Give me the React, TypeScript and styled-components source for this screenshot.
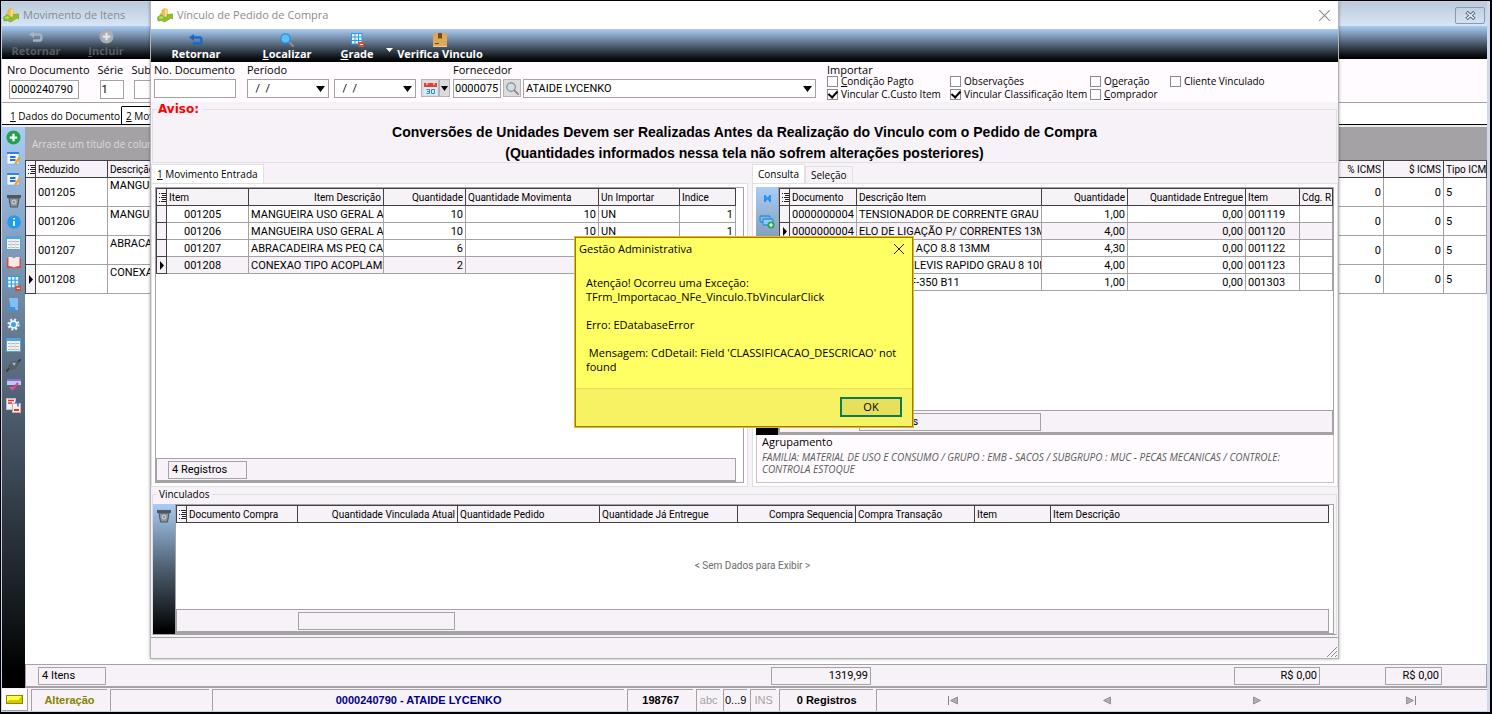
import React from 'react';
import styled, { createGlobalStyle, css } from 'styled-components';

const ui = '"Open Sans", "Noto Sans", sans-serif';
const grid = 'Roboto, "Liberation Sans", sans-serif';
const surface = '#f7f2f7';
const panel = '#fffbff';
const line = '#a5a2a5';

const Global = createGlobalStyle`
  * { box-sizing: border-box; }
  html, body { margin: 0; }
  body { font: 11px/14px ${ui}; color: #000; background: #000; }
  button, input, select { font: inherit; color: inherit; border-radius: 0; margin: 0; padding: 0; }
  button { border: 0; background: none; }
  svg { display: block; flex: none; }
`;

/* ---------- shell ---------- */

const Shell = styled.div`
  position: relative;
  display: flex;
  flex-direction: column;
  min-height: 100vh;
  padding: 1px 2px 2px 1px;
  background: #000;
`;

const MainWindow = styled.main`
  flex: 1;
  display: flex;
  flex-direction: column;
  min-width: 0;
  background: ${surface};
  border: 1px solid #c6d3e7;
  border-right: 3px solid #ccd9ee;
`;

const MainTitle = styled.header`
  display: flex;
  align-items: center;
  gap: 4px;
  height: 24px;
  padding: 2px 2px 0 1px;
  background: linear-gradient(#bccbdb, #d6e6f7);
  color: #858b94;
  line-height: 16px;
  h1 { flex: 1; margin: 0; font: inherit; }
`;

const CloseBox = styled.button`
  width: 30px;
  height: 17px;
  border: 1px solid #8a9aac;
  border-radius: 2px;
  display: grid;
  place-items: center;
`;

const Toolbar = styled.div`
  display: flex;
  height: 33px;
  background: linear-gradient(#a9cdf5, #546679 48%, #0c1014 88%, #000);
`;

const ToolButton = styled.button<{ $w: number; $off?: boolean }>`
  width: ${p => p.$w}px;
  display: flex;
  flex-direction: column;
  align-items: center;
  justify-content: flex-end;
  white-space: nowrap;
  font-weight: 700;
  font-size: 11px;
  line-height: 14px;
  padding-bottom: 1px;
  color: ${p => (p.$off ? '#5a5f66' : '#fff')};
`;

const MainForm = styled.form`
  display: flex;
  gap: 8px;
  height: 44px;
  padding: 4px 5px 0;
  background: ${panel};
  border-bottom: 1px solid ${line};
`;

const Field = styled.label`
  display: flex;
  flex-direction: column;
  gap: 3px;
  white-space: nowrap;
  input { margin-left: 2px; }
`;

const TextBox = styled.input<{ $w: number }>`
  width: ${p => p.$w}px;
  height: 19px;
  padding: 0 1px;
  border: 1px solid ${line};
  background: #fff;
  font-family: ${grid};
  font-size: 11px;
`;

const MainTabs = styled.nav`
  display: flex;
  align-items: flex-end;
  height: 22px;
  background: #fff;
  border-bottom: 1px solid #000;
  box-shadow: 0 2px 0 #efebef;
`;

const MainTab = styled.button<{ $w: number }>`
  width: ${p => p.$w}px;
  height: 18px;
  padding-left: 4px;
  font-size: 10px;
  white-space: nowrap;
  text-align: left;
  background: #fff;
  border: 1px solid #000;
  border-width: 1px 1px 0 0;
  &:first-child { border-top-color: #fff; padding-left: 8px; }
`;

const MainBody = styled.div`
  flex: 1;
  display: flex;
  min-height: 0;
  margin-top: 2px;
`;

const SideBar = styled.aside<{ $pad: number }>`
  flex: none;
  width: ${p => (p.$pad ? 22 : 23)}px;
  padding-top: ${p => p.$pad || 3}px;
  background: linear-gradient(#a9cdf5, #546679 46%, #111518 88%, #000 97%);
`;

const IconStack = styled.div<{ $h: number }>`
  height: ${p => p.$h}px;
  display: flex;
  flex-direction: column;
  align-items: center;
  justify-content: space-between;
`;

const MainGrid = styled.section`
  flex: 1;
  min-width: 0;
  display: flex;
  flex-direction: column;
  background: #fff;
`;

const GroupBar = styled.div`
  height: 33px;
  padding: 10px 7px 0;
  background: #a5a2a5;
  color: #dcdadc;
  font-size: 10px;
  white-space: nowrap;
`;

const Footer = styled.div`
  display: flex;
  align-items: center;
  height: 24px;
  margin-top: auto;
  background: ${surface};
  border: 1px solid ${line};
  border-bottom-width: 2px;
  font-family: ${grid};
  font-size: 11px;
`;

const SumBox = styled.output<{ $w: number; $right?: boolean; $ml?: number }>`
  width: ${p => p.$w}px;
  height: 18px;
  line-height: 16px;
  margin-left: ${p => p.$ml ?? 0}px;
  padding: 0 2px 0 3px;
  border: 1px solid ${line};
  white-space: nowrap;
  text-align: ${p => (p.$right ? 'right' : 'left')};
`;

const Spring = styled.span<{ $n: number }>`
  flex: ${p => p.$n} 1 0;
`;

const StatusBar = styled.footer`
  display: flex;
  gap: 3px;
  height: 23px;
  padding-top: 1px;
  background: ${surface};
  font-family: "Liberation Sans", sans-serif;
  font-size: 11px;
  font-weight: 700;
  line-height: 20px;
`;

const StatusCell = styled.div<{ $w?: number; $grow?: number; $tone?: string; $plain?: boolean }>`
  ${p => (p.$grow ? css`flex: ${p.$grow} 1 0;` : css`flex: none; width: ${p.$w}px;`)}
  border-top: 1px solid ${line};
  border-left: 1px solid ${line};
  text-align: center;
  white-space: nowrap;
  color: ${p => p.$tone || '#000'};
  font-weight: ${p => (p.$plain ? 400 : 700)};
`;

const LedCell = styled.div`
  width: 26px;
  display: grid;
  place-items: center;
  border-right: 1px solid ${line};
  border-bottom: 1px solid ${line};
  background: ${panel};
`;

const NavCell = styled(StatusCell)`
  display: flex;
  button { flex: 1; display: grid; place-items: center; }
`;

/* ---------- tables ---------- */

const Table = styled.table`
  width: 100%;
  table-layout: fixed;
  border-collapse: separate;
  border-spacing: 0;
  border-top: 1px solid #424142;
  border-left: 1px solid #424142;
  font-family: ${grid};
  font-size: 11px;
  line-height: 15px;
`;

const Th = styled.th<{ $right?: boolean }>`
  height: 17px;
  padding: 0 2px;
  font-size: 10px;
  font-weight: 400;
  text-align: ${p => (p.$right ? 'right' : 'left')};
  background: ${surface};
  border-right: 1px solid #424142;
  border-bottom: 1px solid #424142;
  overflow: hidden;
  white-space: nowrap;
`;

const Td = styled.td<{ $h: number; $right?: boolean; $on?: boolean; $top?: boolean; $indent?: number }>`
  height: ${p => p.$h}px;
  padding: 0 2px 0 ${p => p.$indent ?? 2}px;
  vertical-align: ${p => (p.$top ? 'top' : 'middle')};
  text-align: ${p => (p.$right ? 'right' : 'left')};
  background: ${p => (p.$on ? surface : '#fff')};
  border-right: 1px solid ${line};
  border-bottom: 1px solid ${line};
  overflow: hidden;
  white-space: nowrap;
`;

const Mark = styled.td`
  padding: 0 0 0 2px;
  background: ${surface};
  border-right: 1px solid #424142;
  border-bottom: 1px solid #424142;
`;

type Col = { title: string; w?: number; right?: boolean; cellRight?: boolean; top?: boolean; indent?: number };

function DataTable({ cols, rows, current, rowHeight }: { cols: Col[]; rows: string[][]; current?: number; rowHeight: number }) {
  return (
    <Table>
      <colgroup>
        <col width={10} />
        {cols.map((c, i) => <col key={i} width={c.w} />)}
      </colgroup>
      <thead>
        <tr>
          <Th aria-label="Colunas"><ListGlyph /></Th>
          {cols.map((c, i) => <Th key={i} $right={c.right}>{c.title}</Th>)}
        </tr>
      </thead>
      <tbody>
        {rows.map((r, i) => (
          <tr key={i}>
            <Mark>{current === i && <Pointer />}</Mark>
            {r.map((v, j) => (
              <Td key={j} $h={rowHeight} $right={cols[j].cellRight ?? cols[j].right} $top={cols[j].top}
                $indent={cols[j].indent} $on={current === i && rowHeight < 20}>{v}</Td>
            ))}
          </tr>
        ))}
      </tbody>
    </Table>
  );
}

/* ---------- link window ---------- */

const LinkWindow = styled.section`
  position: absolute;
  z-index: 1;
  top: 1px;
  left: 150px;
  right: 153px;
  bottom: 55px;
  display: flex;
  flex-direction: column;
  background: ${surface};
  border: 1px solid #b5b2b5;
  border-top: 0;
  box-shadow: 0 0 3px rgba(0, 0, 0, 0.35);
`;

const LinkTitle = styled.header`
  display: flex;
  align-items: center;
  gap: 4px;
  height: 28px;
  padding: 0 8px 0 6px;
  background: #fff;
  color: #8c8c8c;
  h2 { flex: 1; margin: 0; font: inherit; }
`;

const Filters = styled.form`
  display: flex;
  height: 40px;
  padding: 1px 3px 0;
  background: ${panel};
`;

const Line = styled.div<{ $gap: number }>`
  display: flex;
  gap: ${p => p.$gap}px;
`;

const Block = styled.div<{ $mr: number; $grow?: boolean }>`
  display: flex;
  flex-direction: column;
  gap: 2px;
  margin-right: ${p => p.$mr}px;
  ${p => p.$grow && 'flex: 1; min-width: 0;'}
`;

const Combo = styled.span<{ $w?: number }>`
  ${p => (p.$w ? css`width: ${p.$w}px;` : css`flex: 1; min-width: 0;`)}
  display: flex;
  align-items: center;
  height: 19px;
  padding: 0 3px 0 0;
  background: #fff;
  border: 1px solid ${line};
  font-family: ${grid};
  font-size: 11px;
  input, select {
    flex: 1;
    min-width: 0;
    border: 0;
    outline: 0;
    background: #fff;
    appearance: none;
    padding-left: 2px;
    height: 16px;
  }
`;

const GrayButton = styled.button<{ $w: number }>`
  width: ${p => p.$w}px;
  height: 18px;
  display: grid;
  place-items: center;
  background: #dedbde;
  border: 1px solid #b5b2b5;
`;

const Checks = styled.fieldset`
  width: 508px;
  margin: 0;
  border: 0;
  padding: 0;
  legend { padding: 0; height: 12px; line-height: 14px; }
`;

const CheckGrid = styled.div`
  display: grid;
  grid-template-columns: 123px 140px 80px auto;
  grid-auto-rows: 13px;
`;

const CheckItem = styled.label`
  display: flex;
  align-items: center;
  gap: 3px;
  font-size: 10px;
  line-height: 13px;
  white-space: nowrap;
  input {
    appearance: none;
    width: 11px;
    height: 11px;
    border: 1px solid #8c8a8c;
    background: #fff;
    display: grid;
    place-items: center;
  }
  input:checked::after {
    content: "";
    width: 4px;
    height: 7px;
    margin-top: -2px;
    border: solid #000;
    border-width: 0 2px 2px 0;
    transform: rotate(42deg);
  }
`;

const Notice = styled.fieldset`
  margin: 1px 1px 0;
  padding: 0;
  height: 60px;
  border: 1px solid #e0dfe2;
  text-align: left;
  font: 700 14px/21px "Liberation Sans", sans-serif;
  legend {
    margin-left: 4px;
    padding: 0 4px 0 1px;
    font: 700 12px/13px "DejaVu Sans", sans-serif;
    color: #f00;
  }
  p { margin: 0; text-align: center; white-space: nowrap; }
  p:first-of-type { margin-top: 6px; }
`;

const Split = styled.div`
  flex: 1;
  min-height: 0;
  display: grid;
  grid-template-columns: 601fr 586fr;
`;

const Pane = styled.section`
  min-width: 0;
  display: flex;
  flex-direction: column;
`;

const Tabs = styled.div`
  display: flex;
  align-items: flex-end;
  height: 20px;
`;

const Tab = styled.button<{ $on?: boolean }>`
  height: ${p => (p.$on ? 19 : 17)}px;
  padding: 0 5px;
  border: 1px solid #e3e0e3;
  border-bottom: 0;
  background: ${p => (p.$on ? '#fff' : surface)};
  font-size: 10px;
  white-space: nowrap;
`;

const Page = styled.div<{ $mr: number }>`
  flex: 1;
  min-height: 0;
  display: flex;
  margin-right: ${p => p.$mr}px;
  padding: 3px;
  background: #fff;
  border: 1px solid #e3e0e3;
`;

const GridBox = styled.div<{ $pr?: number }>`
  flex: 1;
  min-width: 0;
  display: flex;
  flex-direction: column;
  padding-right: ${p => p.$pr ?? 0}px;
  background: #fff;
  border: 1px solid ${line};
  overflow: hidden;
`;

const Stack = styled.div`
  flex: 1;
  min-width: 0;
  display: flex;
  flex-direction: column;
`;

const Row = styled.div<{ $h?: number }>`
  ${p => (p.$h ? css`height: ${p.$h}px;` : css`flex: 1; min-height: 0;`)}
  display: flex;
`;

const Group = styled.div`
  height: 48px;
  padding: 0 5px;
  background: ${panel};
  border: 1px solid #c6c3c6;
  border-top: 0;
  em { display: block; font-size: 10px; line-height: 12px; color: #5a5a5a; margin-top: 2px; }
`;

const Linked = styled.fieldset`
  margin: 0 1px;
  padding: 3px 2px 0 0;
  border: 1px solid #e0dfe2;
  border-bottom-color: ${line};
  min-width: 0;
  legend { margin-left: 4px; padding: 0 2px; font-size: 10px; line-height: 14px; }
`;

const Empty = styled.p`
  flex: 1;
  display: grid;
  place-items: center;
  margin: 0;
  color: #6b6b6b;
  font-family: ${grid};
  font-size: 10px;
`;

const LinkStatus = styled.footer`
  display: flex;
  justify-content: flex-end;
  align-items: flex-end;
  height: 21px;
  margin-top: 2px;
  border-top: 1px solid ${line};
`;

/* ---------- alert ---------- */

const Alert = styled.section`
  position: absolute;
  z-index: 2;
  top: 237px;
  left: calc(50% - 171px);
  width: 338px;
  display: flex;
  flex-direction: column;
  background: #ffff63;
  border: 1px solid #8f7c10;
  outline: 1px solid #f0bc00;
  header { display: flex; justify-content: space-between; align-items: center; height: 22px; padding: 0 8px 0 3px; }
  p { margin: 0; padding: 16px 10px 13px; height: 128px; white-space: pre-line; }
  footer { display: flex; justify-content: flex-end; padding: 8px 10px 9px; height: 38px; background: #f7f263; border-top: 1px solid #e6df5c; }
`;

const OkButton = styled.button`
  width: 62px;
  height: 20px;
  background: #e6e05c;
  border: 2px solid #0a7d55;
`;

/* ---------- drawings ---------- */

const ListGlyph = () => (
  <svg width="7" height="11" viewBox="0 0 7 11"><path d="M2 1.5h5M3 3.5h4M2 5.5h5M3 7.5h4M2 9.5h5" stroke="#222" /><path d="M0 1.5h1M0 5.5h1M0 9.5h1" stroke="#222" /></svg>
);
const Pointer = () => <svg width="6" height="9" viewBox="0 0 6 9"><path d="M1 0l4 4.500-4 4.500z" fill="#000" /></svg>;
const Down = ({ w = 9 }: { w?: number }) => (
  <svg width={w} height={w > 7 ? 6 : 5} viewBox="0 0 9 6" preserveAspectRatio="none"><path d="M0 0h9L4.500 6z" fill="#000" /></svg>
);
const AppIcon = () => (
  <svg width="16" height="15" viewBox="0 0 16 15">
    <path d="M5 2l3-1.500 2.500 1V8L8 9.500 3 9V6l2-1z" fill="#f0c24c" stroke="#d9a32e" strokeWidth=".6" />
    <path d="M8 .8l2.500 1V8L8 9z" fill="#f8dc86" />
    <path d="M.5 9l4-2 3 2v1.500L11 8l-1-1.500 5.500-.5v5l-1.500-1L7.500 14 4.500 12.500 1 13z" fill="#8cc32a" stroke="#6a9a1c" strokeWidth=".6" />
    <path d="M1 9.500l3.500-1.500L7 9.500 4.500 11z" fill="#b6dd55" />
  </svg>
);
const Cross = ({ c = '#8c8c8c', s = 10 }: { c?: string; s?: number }) => (
  <svg width={s} height={s} viewBox="0 0 10 10"><path d="M0 0l10 10M10 0L0 10" stroke={c} strokeWidth="1" /></svg>
);
const Back = ({ c }: { c: string }) => (
  <svg width="14" height="14" viewBox="0 0 14 14"><path d="M3 4.500h7.500q2 0 2 3t-2 3H4" fill="none" stroke={c} strokeWidth="2.400" /><path d="M0 4.500L5 1v7z" fill={c} /></svg>
);
const PlusRound = ({ bg, fg, s = 15 }: { bg: string; fg: string; s?: number }) => (
  <svg width={s} height={s} viewBox="0 0 16 16"><circle cx="8" cy="8" r="7.500" fill={bg} /><path d="M8 4v8M4 8h8" stroke={fg} strokeWidth="2.400" /></svg>
);
const Lens = ({ glass, rim, s = 14 }: { glass: string; rim: string; s?: number }) => (
  <svg width={s} height={s} viewBox="0 0 14 14"><path d="M9 9l4 4" stroke="#9a8a80" strokeWidth="2" strokeLinecap="round" /><circle cx="5.500" cy="5.500" r="4.600" fill={glass} stroke={rim} strokeWidth="1.300" /></svg>
);
const GridIcon = ({ s = 14 }: { s?: number }) => (
  <svg width={s} height={s} viewBox="0 0 14 14"><rect x="1" y="0" width="11" height="11" fill="#eaf6ff" /><path d="M1 .5h11M1 4h11M1 7.500h11M1 11h11M1.500 0v11M5 0v11M8.500 0v11M12 0v11" stroke="#2a9af0" /><rect x="8.500" y="9" width="5.500" height="5" fill="#e8472c" /><path d="M10 11.500h3" stroke="#fff" /></svg>
);
const Box = () => (
  <svg width="14" height="14" viewBox="0 0 14 14"><rect width="14" height="14" fill="#dca95a" /><path d="M5 0h4v6L7 5 5 6z" fill="#7b4b1c" /><path d="M2 10.500h4" stroke="#6b4420" /><path d="M0 13.500h14" stroke="#f3cf8d" /></svg>
);
const Calendar = () => (
  <svg width="13" height="13" viewBox="0 0 13 13"><rect y="2" width="13" height="11" fill="#d9ecfb" /><rect y="1" width="13" height="4" fill="#e8402f" /><path d="M3 0v3M10 0v3" stroke="#fff" /><path d="M2.500 7.500h3v4h-3M3 9.500h2M7.500 7.500h3v4h-3z" fill="none" stroke="#2b86d8" /></svg>
);
const EditIcon = () => (
  <svg width="14" height="14" viewBox="0 0 14 14"><rect x="0" y="1" width="12" height="11" fill="#eef5ff" stroke="#6fa4df" strokeWidth=".6" /><rect y="0" width="12" height="2" fill="#3b82dd" /><path d="M3 5h5.500M3 8h5.500" stroke="#2a6fd6" strokeWidth="1.800" /><path d="M13 5l-5 7" stroke="#f4a321" strokeWidth="2.200" /></svg>
);
const Trash = () => (
  <svg width="14" height="14" viewBox="0 0 14 14"><path d="M2 4h10l-1.500 9h-7z" fill="#8b939b" stroke="#4c5359" /><path d="M0 1h14v3H0z" fill="#50575d" /><circle cx="7" cy="8" r="2" fill="none" stroke="#d3dae0" /></svg>
);
const Info = () => (
  <svg width="14" height="14" viewBox="0 0 14 14"><circle cx="7" cy="7" r="6.800" fill="#1f9bf0" /><path d="M7 6v5M7 3v1.600" stroke="#fff" strokeWidth="1.800" /></svg>
);
const SheetIcon = () => (
  <svg width="15" height="14" viewBox="0 0 15 14"><rect x=".5" y=".5" width="14" height="13" fill="#f4f2ef" stroke="#4ea5dd" /><path d="M1 2h13" stroke="#4ea5dd" strokeWidth="2" /><path d="M2 5.500h11M2 8.500h11M2 11.500h11" stroke="#b9b9b9" /><path d="M5 4v9M9.500 4v9" stroke="#ddd" /></svg>
);
const BookIcon = () => (
  <svg width="14" height="12" viewBox="0 0 14 12"><path d="M0 1h14v10H8l-1 1-1-1H0z" fill="#d34c48" /><path d="M1.500 0q4-.5 5.500 1.500Q8.500-.5 12.500 0v9Q8.500 9 7 10.500 5.500 9 1.500 9z" fill="#f6e9e6" /></svg>
);
const Scroll = () => (
  <svg width="13" height="13" viewBox="0 0 13 13"><path d="M2 0h9v12H4z" fill="#7cc0f8" /><path d="M0 9h8v1.500q.5 2 3 2H2.500Q0 12.500 0 9z" fill="#3b95e6" /></svg>
);
const Gear = () => (
  <svg width="13" height="13" viewBox="0 0 13 13"><circle cx="6.500" cy="6.500" r="5" fill="none" stroke="#e4f3fc" strokeWidth="2.200" strokeDasharray="2 1.930" /><circle cx="6.500" cy="6.500" r="3.400" fill="#3f9fe2" stroke="#eef8ff" strokeWidth="1.800" /></svg>
);
const Plug = () => (
  <svg width="15" height="13" viewBox="0 0 15 13"><path d="M0 13l5-6M10 5l5-5" stroke="#3c3f3f" strokeWidth="2" /><path d="M2 7l4-5h6l1 3-4 5-5 1z" fill="#565f62" /><path d="M6 3.500l4 .5-2 3z" fill="#7cc4ee" /></svg>
);
const Brush = () => (
  <svg width="14" height="12" viewBox="0 0 14 12"><rect width="14" height="6" fill="#c9c5f2" /><path d="M0 1h14" stroke="#7a74d4" strokeWidth="2" /><path d="M11 4l-6 7" stroke="#df3f9c" strokeWidth="2.200" /><path d="M2 8h5l-2 3z" fill="#e2579f" /></svg>
);
const Sheets = () => (
  <svg width="15" height="15" viewBox="0 0 15 15"><rect x=".5" y=".5" width="9" height="11" fill="#f4eef0" stroke="#c9b9c0" /><path d="M2 2.500h6M2 5h4" stroke="#e0362c" strokeWidth="1.500" /><rect x="6.500" y="5.500" width="8" height="9" fill="#fbeff0" stroke="#d0a8ac" /><path d="M8 12h5" stroke="#e0362c" strokeWidth="2" /><path d="M9 4.500h3v4" fill="none" stroke="#2a6fd6" strokeWidth="1.500" /></svg>
);
const LinkGlyph = () => (
  <svg width="7" height="7" viewBox="0 0 7 7"><path d="M1 0v7M6 0v7" stroke="#1f8ff0" strokeWidth="1.800" /><path d="M1 1l5 5M6 1L1 6" stroke="#1f8ff0" strokeWidth="1.300" /></svg>
);
const CardsPlus = () => (
  <svg width="16" height="14" viewBox="0 0 16 14"><rect x="1" y="1" width="10" height="6" rx="1" fill="none" stroke="#2a95e0" strokeWidth="1.300" /><rect x="4" y="4" width="10" height="6" rx="1" fill="#9cc8ee" stroke="#2a95e0" strokeWidth="1.300" /><circle cx="12" cy="10" r="3.500" fill="#2ea24a" /><path d="M12 8v4M10 10h4" stroke="#fff" strokeWidth="1.200" /></svg>
);
const Led = () => (
  <svg width="17" height="9" viewBox="0 0 17 9"><path d="M0 0h17v9H0z" fill="#8a8a00" /><path d="M1 1h15l-3 4H4L1 7z" fill="#ffff3a" /><path d="M1 7l3-2h9l3-3v6H1z" fill="#d2cc00" /></svg>
);
const NavGlyph = ({ flip, bar }: { flip?: boolean; bar?: boolean }) => (
  <svg width="12" height="9" viewBox="0 0 12 9">
    <g transform={flip ? 'translate(12 0) scale(-1 1)' : undefined}>
      <path d="M1.500 1l7 3.500-7 3.500z" fill="#b0adb0" stroke="#949294" />{bar && <path d="M10.500 0v9" stroke="#848284" />}
    </g>
  </svg>
);
const Grip = () => <svg width="12" height="12" viewBox="0 0 12 12"><path d="M1 11L11 1M5 11l6-6M9 11l2-2" stroke="#8c8a8c" /></svg>;

/* ---------- data ---------- */

const mainCols: Col[] = [
  { title: 'Reduzido', w: 72 }, { title: 'Descrição', top: true },
  { title: '% ICMS', w: 60, right: true }, { title: '$ ICMS', w: 60, right: true }, { title: 'Tipo ICM', w: 43 },
];
const mainRows = [
  ['001205', 'MANGUEIRA USO GERAL', '0', '0', '5'],
  ['001206', 'MANGUEIRA USO GERAL', '0', '0', '5'],
  ['001207', 'ABRACADEIRA MS PEQ', '0', '0', '5'],
  ['001208', 'CONEXAO TIPO ACOPLAMENTO', '0', '0', '5'],
];
const entryCols: Col[] = [
  { title: 'Item', w: 82, indent: 17 }, { title: 'Item Descrição', w: 135, right: true, cellRight: false },
  { title: 'Quantidade', w: 82, right: true }, { title: 'Quantidade Movimenta', w: 133, cellRight: true },
  { title: 'Un Importar', w: 81 }, { title: 'Indice', cellRight: true },
];
const entryRows = [
  ['001205', 'MANGUEIRA USO GERAL A', '10', '10', 'UN', '1'],
  ['001206', 'MANGUEIRA USO GERAL A', '10', '10', 'UN', '1'],
  ['001207', 'ABRACADEIRA MS PEQ CAR', '6', '6', 'UN', '1'],
  ['001208', 'CONEXAO TIPO ACOPLAME', '2', '2', 'UN', '1'],
];
const orderCols: Col[] = [
  { title: 'Documento', w: 67 }, { title: 'Descrição Item', w: 185 }, { title: 'Quantidade', w: 86, right: true },
  { title: 'Quantidade Entregue', w: 118, right: true }, { title: 'Item', w: 54 }, { title: 'Cdg. R' },
];
const orderRows = [
  ['0000000004', 'TENSIONADOR DE CORRENTE GRAU', '1,00', '0,00', '001119', ''],
  ['0000000004', 'ELO DE LIGAÇÃO P/ CORRENTES 13M', '4,00', '0,00', '001120', ''],
  ['0000000004', 'MANTA DE AÇO 8.8 13MM', '4,30', '0,00', '001122', ''],
  ['0000000004', 'GANCHO CLEVIS RAPIDO GRAU 8 10M', '4,00', '0,00', '001123', ''],
  ['0000000004', 'LANTERN F-350 B11', '1,00', '0,00', '001303', ''],
];
const linkedCols: Col[] = [
  { title: 'Documento Compra', w: 111 }, { title: 'Quantidade Vinculada Atual', w: 160, right: true },
  { title: 'Quantidade Pedido', w: 142 }, { title: 'Quantidade Já Entregue', w: 138 },
  { title: 'Compra Sequencia', w: 118, right: true }, { title: 'Compra Transação', w: 119 },
  { title: 'Item', w: 76 }, { title: 'Item Descrição' },
];
const sideIcons = [
  <PlusRound bg="#22a04c" fg="#fff" />, <EditIcon />, <EditIcon />, <Trash />, <Info />, <SheetIcon />, <BookIcon />,
  <GridIcon s={15} />, <Scroll />, <Gear />, <SheetIcon />, <Plug />, <Brush />, <Sheets />,
];

export default function App() {
  return (
    <Shell>
      <Global />
      <MainWindow>
        <MainTitle>
          <AppIcon /><h1>Movimento de Itens</h1>
          <CloseBox aria-label="Fechar">
            <svg width="11" height="9" viewBox="0 0 11 9"><path d="M1.500 1l8 7M9.500 1l-8 7" stroke="#5f6b78" strokeWidth="3.400" /><path d="M2 1.500l7 6M9 1.500l-7 6" stroke="#eef3f9" strokeWidth="1.500" /></svg>
          </CloseBox>
        </MainTitle>
        <Toolbar>
          <ToolButton $w={68} $off><Back c="#a9b1ba" /><span>Retornar</span></ToolButton>
          <ToolButton $w={72} $off><PlusRound bg="#a9adb3" fg="#e4e6e9" /><span><u>I</u>ncluir</span></ToolButton>
        </Toolbar>
        <MainForm>
          <Field>Nro Documento<TextBox $w={70} defaultValue="0000240790" /></Field>
          <Field>Série<TextBox $w={24} defaultValue="1" /></Field>
          <Field>Sub<TextBox $w={24} /></Field>
        </MainForm>
        <MainTabs>
          <MainTab $w={120}><u>1</u> Dados do Documento</MainTab>
          <MainTab $w={90}><u>2</u> Movimento</MainTab>
        </MainTabs>
        <MainBody>
          <SideBar $pad={0}>
            <IconStack $h={283}>
              {sideIcons.map((icon, i) => <button key={i} aria-label={`Ação ${i + 1}`}>{icon}</button>)}
            </IconStack>
          </SideBar>
          <MainGrid>
            <GroupBar>Arraste um título de coluna</GroupBar>
            <DataTable cols={mainCols} rows={mainRows} current={3} rowHeight={29} />
            <Footer>
              <SumBox $w={68} $ml={12}>4 Itens</SumBox>
              <Spring $n={665} />
              <SumBox $w={100} $right>1319,99</SumBox>
              <Spring $n={363} />
              <SumBox $w={86} $right>R$ 0,00</SumBox>
              <SumBox $w={57} $right $ml={65}>R$ 0,00</SumBox>
              <Spring $n={44} />
            </Footer>
          </MainGrid>
        </MainBody>
        <StatusBar>
          <LedCell><Led /></LedCell>
          <StatusCell $w={76} $tone="#848200">Alteração</StatusCell>
          <StatusCell $w={99} />
          <StatusCell $grow={412} $tone="#000084">0000240790 - ATAIDE LYCENKO</StatusCell>
          <StatusCell $w={66}>198767</StatusCell>
          <StatusCell $w={24} $tone="#a5a2a5" $plain>abc</StatusCell>
          <StatusCell $w={24} $plain>0...9</StatusCell>
          <StatusCell $w={26} $tone="#a5a2a5" $plain>INS</StatusCell>
          <StatusCell $w={94}>0 Registros</StatusCell>
          <NavCell $grow={611}>
            <button aria-label="Primeiro"><NavGlyph flip bar /></button>
            <button aria-label="Anterior"><NavGlyph flip /></button>
            <button aria-label="Próximo"><NavGlyph /></button>
            <button aria-label="Último"><NavGlyph bar /></button>
          </NavCell>
        </StatusBar>
      </MainWindow>

      <LinkWindow aria-label="Vínculo de Pedido de Compra">
        <LinkTitle><AppIcon /><h2>Vínculo de Pedido de Compra</h2><button aria-label="Fechar"><Cross s={11} /></button></LinkTitle>
        <Toolbar>
          <ToolButton $w={90}><Back c="#1769cf" /><span>Retornar</span></ToolButton>
          <ToolButton $w={92}><Lens glass="#5bc0f5" rim="#2b8fdc" /><span><u>L</u>ocalizar</span></ToolButton>
          <ToolButton $w={48}><GridIcon /><span><u>G</u>rade</span></ToolButton>
          <ToolButton $w={16} aria-label="Opções da grade"><svg width="7" height="14" viewBox="0 0 7 14"><path d="M0 1h7L3.500 5z" fill="#fff" /></svg></ToolButton>
          <ToolButton $w={86}><Box /><span>Verifica Vinculo</span></ToolButton>
        </Toolbar>
        <Filters>
          <Block $mr={11}><label htmlFor="doc">No. Documento</label><TextBox id="doc" $w={82} /></Block>
          <Block $mr={3}>
            <label htmlFor="from">Período</label>
            <Line $gap={5}>
              <Combo $w={82}><input id="from" defaultValue="  /  /" /><Down /></Combo>
              <Combo $w={82}><input aria-label="Período final" defaultValue="  /  /" /><Down /></Combo>
              <Line $gap={0}>
                <GrayButton $w={18} type="button" aria-label="Calendário"><Calendar /></GrayButton>
                <GrayButton $w={11} type="button" aria-label="Opções de período"><Down w={7} /></GrayButton>
              </Line>
            </Line>
          </Block>
          <Block $mr={11} $grow>
            <label htmlFor="sup">Fornecedor</label>
            <Line $gap={2}>
              <TextBox id="sup" $w={48} defaultValue="0000075" />
              <GrayButton $w={18} type="button" aria-label="Buscar"><Lens glass="#cfe0e4" rim="#85898c" s={13} /></GrayButton>
              <Combo><select aria-label="Nome do fornecedor"><option>ATAIDE LYCENKO</option></select><Down /></Combo>
            </Line>
          </Block>
          <Checks>
            <legend>Importar</legend>
            <CheckGrid>
              <CheckItem><input type="checkbox" /><span><u>C</u>ondição Pagto</span></CheckItem>
              <CheckItem><input type="checkbox" /><span>Observações</span></CheckItem>
              <CheckItem><input type="checkbox" /><span>O<u>p</u>eração</span></CheckItem>
              <CheckItem><input type="checkbox" /><span>Cliente Vinculado</span></CheckItem>
              <CheckItem><input type="checkbox" defaultChecked /><span>Vincular C.Custo Item</span></CheckItem>
              <CheckItem><input type="checkbox" defaultChecked /><span>Vincular Classificação Item</span></CheckItem>
              <CheckItem><input type="checkbox" /><span><u>C</u>omprador</span></CheckItem>
            </CheckGrid>
          </Checks>
        </Filters>
        <Notice>
          <legend>Aviso:</legend>
          <p>Conversões de Unidades Devem ser Realizadas Antes da Realização do Vinculo com o Pedido de Compra</p>
          <p>(Quantidades informados nessa tela não sofrem alterações posteriores)</p>
        </Notice>
        <Split>
          <Pane>
            <Tabs><Tab $on><u>1</u> Movimento Entrada</Tab></Tabs>
            <Page $mr={4}>
              <GridBox $pr={7}>
                <DataTable cols={entryCols} rows={entryRows} current={3} rowHeight={17} />
                <Footer><SumBox $w={79} $ml={11}>4 Registros</SumBox></Footer>
              </GridBox>
            </Page>
          </Pane>
          <Pane>
            <Tabs><Tab $on>Consulta</Tab><Tab>Seleção</Tab></Tabs>
            <Page $mr={0}>
              <Stack>
                <Row>
                  <SideBar $pad={8}>
                    <IconStack $h={34}>
                      <button aria-label="Vincular"><LinkGlyph /></button>
                      <button aria-label="Adicionar"><CardsPlus /></button>
                    </IconStack>
                  </SideBar>
                  <GridBox>
                    <DataTable cols={orderCols} rows={orderRows} current={1} rowHeight={17} />
                    <Footer><SumBox $w={182} $ml={79}>5 Registros</SumBox></Footer>
                  </GridBox>
                </Row>
                <Group>Agrupamento<em>FAMILIA: MATERIAL DE USO E CONSUMO / GRUPO : EMB - SACOS / SUBGRUPO : MUC - PECAS MECANICAS / CONTROLE: CONTROLA ESTOQUE</em></Group>
              </Stack>
            </Page>
          </Pane>
        </Split>
        <Linked>
          <legend>Vinculados</legend>
          <Row $h={130}>
            <SideBar $pad={5}><IconStack $h={14}><button aria-label="Excluir"><Trash /></button></IconStack></SideBar>
            <GridBox $pr={4}>
              <DataTable cols={linkedCols} rows={[]} rowHeight={17} />
              <Empty>&lt; Sem Dados para Exibir &gt;</Empty>
              <Footer><SumBox $w={157} $ml={121} /></Footer>
            </GridBox>
          </Row>
        </Linked>
        <LinkStatus><Grip /></LinkStatus>
      </LinkWindow>

      <Alert role="alertdialog" aria-label="Gestão Administrativa">
        <header>Gestão Administrativa<button aria-label="Fechar"><Cross c="#222" /></button></header>
        <p>{"Atenção! Ocorreu uma Exceção:\nTFrm_Importacao_NFe_Vinculo.TbVincularClick\n\nErro: EDatabaseError\n\n\u00a0Mensagem: CdDetail: Field 'CLASSIFICACAO_DESCRICAO' not found"}</p>
        <footer><OkButton>OK</OkButton></footer>
      </Alert>
    </Shell>
  );
}
